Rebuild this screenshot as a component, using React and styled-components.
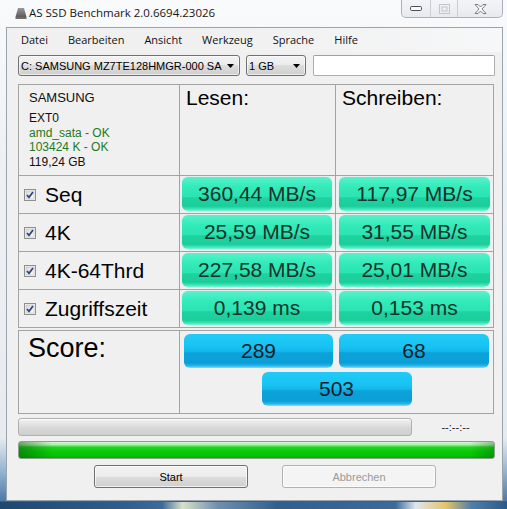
import React from "react";
import styled, { createGlobalStyle } from "styled-components";

const Global = createGlobalStyle`
  html, body { margin: 0; padding: 0; background: #ffffff; }
  body { width: 507px; height: 509px; overflow: hidden; }
  * { box-sizing: border-box; }
`;

const Frame = styled.div`
  width: 507px;
  height: 509px;
  display: flex;
  flex-direction: column;
  background: linear-gradient(to bottom, #f9fafc 0%, #eef1f4 30%, #e7ebef 86%, #8fb0cf 93%, #3a6a9a 100%);
  font-family: "Liberation Sans", Arial, sans-serif;
`;

const TitleBar = styled.div`
  height: 27px;
  flex-shrink: 0;
  display: flex;
  align-items: flex-start;
  padding: 0 4px 0 15px;
`;

const TitleIconBox = styled.svg`
  margin-top: 7px;
  flex-shrink: 0;
`;

const TitleText = styled.span`
  font-family: "Open Sans", "Noto Sans", sans-serif;
  font-size: 11.5px;
  line-height: 16px;
  color: #161616;
  margin: 5px 0 0 2px;
  white-space: nowrap;
`;

const CaptionGroup = styled.div`
  margin-left: auto;
  display: flex;
  height: 18px;
  border: 1px solid #a9b2bc;
  border-top: none;
  border-radius: 0 0 5px 5px;
  background: linear-gradient(to bottom, #f3f5f8, #e6eaef);
  overflow: hidden;
`;

const CaptionButton = styled.div`
  width: ${(p) => p.$w}px;
  display: flex;
  align-items: center;
  justify-content: center;
  border-left: ${(p) => (p.$first ? "none" : "1px solid #c9ced5")};
`;

const Client = styled.div`
  flex: 1;
  margin: 0 4px 0 6px;
  border: 1px solid #9aa4af;
  background: #f0f0f0;
  display: flex;
  flex-direction: column;
  padding: 0 7px 0 11px;
`;

const MenuBar = styled.div`
  height: 24px;
  display: flex;
  align-items: center;
  gap: 20px;
  margin: 0 -7px 0 -11px;
  padding-left: 14px;
  background: linear-gradient(to right, #f0f0f0 40%, #f6f7f8 100%);
`;

const MenuItem = styled.span`
  font-family: "Open Sans", "Noto Sans", sans-serif;
  font-size: 11px;
  color: #111;
  line-height: 16px;
`;

const ComboRow = styled.div`
  margin-top: 3px;
  height: 21px;
  display: flex;
  gap: 6px;
`;

const Combo = styled.div`
  width: ${(p) => p.$w}px;
  flex-shrink: 0;
  height: 21px;
  display: flex;
  align-items: center;
  border: 1px solid #707070;
  border-radius: 3px;
  background: linear-gradient(to bottom, #f2f2f2 0%, #ebebeb 50%, #dddddd 50%, #cfcfcf 100%);
  box-shadow: inset 0 0 0 1px rgba(255, 255, 255, 0.6);
  padding-left: 2px;
`;

const ComboText = styled.span`
  flex: 1;
  white-space: nowrap;
  font-size: 11px;
  color: #000;
`;

const ComboArrow = styled.div`
  width: 17px;
  flex-shrink: 0;
  display: flex;
  align-items: center;
  justify-content: center;
`;

const TextBox = styled.div`
  flex: 1;
  margin-left: 1px;
  height: 21px;
  background: #fff;
  border: 1px solid #abadb3;
  border-top-color: #9da1a9;
  border-radius: 2px;
`;

const Table = styled.div`
  margin-top: 8px;
  display: grid;
  grid-template-columns: 160px 155px 157px;
  grid-template-rows: 90px repeat(4, 37px);
  gap: 1px;
  padding: 1px;
  background: #a3a3a3;
  width: 476px;
`;

const Cell = styled.div`
  background: #f0f0f0;
`;

const InfoCell = styled(Cell)`
  padding: 5px 0 0 10px;
  font-size: 12px;
  line-height: 14.6px;
  color: #111;
`;

const DriveName = styled.div`
  font-size: 13px;
  line-height: 16px;
  margin-bottom: 5px;
`;

const InfoLine = styled.div`
  color: ${(p) => (p.$ok ? "#1e7a22" : "#111")};
`;

const HeadCell = styled(Cell)`
  padding: 2px 0 0 6px;
  font-size: 21px;
  line-height: 22px;
  color: #000;
`;

const LabelCell = styled(Cell)`
  display: flex;
  align-items: center;
  gap: 9px;
  padding-left: 5px;
  font-size: 21px;
  color: #000;
`;

const ResultCell = styled(Cell)`
  display: flex;
  padding: 1px 3px 2px ${(p) => p.$pl}px;
`;

const GreenBox = styled.div`
  flex: 1;
  border-radius: 6px;
  display: flex;
  align-items: center;
  justify-content: center;
  font-size: 21px;
  color: #17332c;
  background: linear-gradient(
    to bottom,
    #56f3cc 0%,
    #33eab9 30%,
    #2be4b2 58%,
    #1fd3a1 61%,
    #1bcd9a 86%,
    #3ee5b8 94%,
    #7cf6d6 100%
  );
  box-shadow: 0 0 1px #5ef0c8;
`;

const ScoreTable = styled.div`
  margin-top: 2px;
  display: grid;
  grid-template-columns: 160px 313px;
  height: 84px;
  gap: 1px;
  padding: 1px;
  background: #a3a3a3;
  width: 476px;
`;

const ScoreLabel = styled(Cell)`
  padding: 2px 0 0 9px;
  font-size: 27px;
  line-height: 30px;
  color: #000;
`;

const ScoreArea = styled(Cell)`
  display: grid;
  grid-template-columns: 149px 150px;
  grid-auto-rows: 34px;
  gap: 4px 6px;
  padding: 3px 4px;
`;

const BlueBox = styled.div`
  border-radius: 6px;
  display: flex;
  align-items: center;
  justify-content: center;
  font-size: 21px;
  color: #0f1d28;
  background: linear-gradient(
    to bottom,
    #22cbf7 0%,
    #17c2f2 40%,
    #12b6ea 52%,
    #0ca3da 55%,
    #0a9ed6 85%,
    #2ab8ea 94%,
    #8fdcf8 100%
  );
  ${(p) => (p.$wide ? "grid-column: 1 / span 2; justify-self: center; width: 150px;" : "")}
`;

const ProgressRow = styled.div`
  margin-top: 4px;
  height: 18px;
  display: flex;
  align-items: center;
`;

const GrayBar = styled.div`
  width: 394px;
  height: 18px;
  border: 1px solid #b0b0b0;
  border-radius: 3px;
  background: linear-gradient(to bottom, #f2f2f2 0%, #e2e2e2 35%, #d6d6d6 60%, #cfcfcf 100%);
  box-shadow: inset 0 1px 0 rgba(255, 255, 255, 0.8);
`;

const TimeLabel = styled.span`
  flex: 1;
  text-align: center;
  font-size: 11px;
  color: #222;
  padding-left: 4px;
`;

const GreenBar = styled.div`
  margin-top: 5px;
  height: 18px;
  border: 1px solid #8aa08a;
  border-radius: 3px;
  background:
    linear-gradient(to right, rgba(0, 70, 0, 0.45) 0%, rgba(0, 70, 0, 0) 7%, rgba(0, 70, 0, 0) 95%, rgba(0, 70, 0, 0.3) 100%),
    linear-gradient(to bottom, #d6f6d6 0%, #a4eea4 18%, #22d322 32%, #07ca07 60%, #05c205 85%, #0aa90a 100%);
`;

const ButtonRow = styled.div`
  margin-top: 6px;
  height: 23px;
  display: flex;
  gap: 34px;
  padding-left: 76px;
`;

const Button = styled.div`
  width: 154px;
  height: 23px;
  border-radius: 3px;
  display: flex;
  align-items: center;
  justify-content: center;
  font-size: 11px;
  border: 1px solid ${(p) => (p.$disabled ? "#adb2b5" : "#707070")};
  color: ${(p) => (p.$disabled ? "#9a9a9a" : "#000")};
  background: ${(p) =>
    p.$disabled
      ? "#f4f4f4"
      : "linear-gradient(to bottom, #f2f2f2 0%, #ebebeb 50%, #dddddd 50%, #cfcfcf 100%)"};
  box-shadow: inset 0 0 0 1px rgba(255, 255, 255, 0.7);
`;

const BottomEdge = styled.div`
  height: 8px;
  flex-shrink: 0;
  border-top: 1px solid #3d5f82;
  background: linear-gradient(
    to right,
    #1e4770 0%,
    #2e5f8f 25%,
    #3c6c9a 32%,
    #d8e0c8 36%,
    #6f8fae 43%,
    #2f5f8e 55%,
    #3a6b9a 78%,
    #dfe6ef 82%,
    #e2c46a 88%,
    #4f7fab 93%,
    #2a5a88 100%
  );
`;

const DriveIcon = () => (
  <TitleIconBox width="12" height="12" viewBox="0 0 12 12">
    <defs>
      <linearGradient id="di" x1="0" y1="0" x2="0" y2="1">
        <stop offset="0" stopColor="#9a9a9a" />
        <stop offset="1" stopColor="#5a5a5a" />
      </linearGradient>
    </defs>
    <polygon points="3,1 9,1 11.5,10 0.5,10" fill="url(#di)" />
    <rect x="0.5" y="10" width="11" height="2" fill="#6e6e6e" />
  </TitleIconBox>
);

const Arrow = () => (
  <svg width="7" height="4" viewBox="0 0 7 4">
    <polygon points="0,0 7,0 3.5,4" fill="#000" />
  </svg>
);

const Check = () => (
  <svg width="12" height="12" viewBox="0 0 12 12">
    <defs>
      <linearGradient id="cb" x1="0" y1="0" x2="1" y2="1">
        <stop offset="0" stopColor="#d9d9d9" />
        <stop offset="1" stopColor="#fbfbfb" />
      </linearGradient>
    </defs>
    <rect x="0.5" y="0.5" width="11" height="11" fill="#f4f4f4" stroke="#8f8f8f" />
    <rect x="2" y="2" width="8" height="8" fill="url(#cb)" stroke="#c0c0c0" strokeWidth="0.6" />
    <path d="M3 6 L5 8.3 L9 3" fill="none" stroke="#2e437c" strokeWidth="1.7" />
  </svg>
);

const rows = [
  { label: "Seq", read: "360,44 MB/s", write: "117,97 MB/s" },
  { label: "4K", read: "25,59 MB/s", write: "31,55 MB/s" },
  { label: "4K-64Thrd", read: "227,58 MB/s", write: "25,01 MB/s" },
  { label: "Zugriffszeit", read: "0,139 ms", write: "0,153 ms" },
];

const menus = ["Datei", "Bearbeiten", "Ansicht", "Werkzeug", "Sprache", "Hilfe"];

export default function App() {
  return (
    <>
      <Global />
      <Frame>
        <TitleBar>
          <DriveIcon />
          <TitleText>AS SSD Benchmark 2.0.6694.23026</TitleText>
          <CaptionGroup>
            <CaptionButton $w={28} $first>
              <svg width="12" height="5" viewBox="0 0 12 5">
                <rect x="0.5" y="0.5" width="11" height="4" rx="1.2" fill="#fafafa" stroke="#4a4f57" />
              </svg>
            </CaptionButton>
            <CaptionButton $w={27}>
              <svg width="11" height="10" viewBox="0 0 11 10">
                <rect x="0.5" y="0.5" width="10" height="9" fill="none" stroke="#c2c6cc" />
                <rect x="3" y="3" width="5" height="4" fill="none" stroke="#c2c6cc" />
              </svg>
            </CaptionButton>
            <CaptionButton $w={45}>
              <svg width="13" height="10" viewBox="0 0 13 10">
                <path
                  d="M1 0.5 H4 L6.5 3 L9 0.5 H12 L8 5 L12 9.5 H9 L6.5 7 L4 9.5 H1 L5 5 Z"
                  fill="#fafafa"
                  stroke="#6a7079"
                  strokeWidth="0.9"
                />
              </svg>
            </CaptionButton>
          </CaptionGroup>
        </TitleBar>

        <Client>
          <MenuBar>
            {menus.map((m) => (
              <MenuItem key={m}>{m}</MenuItem>
            ))}
          </MenuBar>

          <ComboRow>
            <Combo $w={222}>
              <ComboText>C: SAMSUNG MZ7TE128HMGR-000 SA</ComboText>
              <ComboArrow>
                <Arrow />
              </ComboArrow>
            </Combo>
            <Combo $w={60}>
              <ComboText>1 GB</ComboText>
              <ComboArrow>
                <Arrow />
              </ComboArrow>
            </Combo>
            <TextBox />
          </ComboRow>

          <Table>
            <InfoCell>
              <DriveName>SAMSUNG</DriveName>
              <InfoLine>EXT0</InfoLine>
              <InfoLine $ok>amd_sata - OK</InfoLine>
              <InfoLine $ok>103424 K - OK</InfoLine>
              <InfoLine>119,24 GB</InfoLine>
            </InfoCell>
            <HeadCell>Lesen:</HeadCell>
            <HeadCell>Schreiben:</HeadCell>
            {rows.map((r) => (
              <React.Fragment key={r.label}>
                <LabelCell>
                  <Check />
                  {r.label}
                </LabelCell>
                <ResultCell $pl={2}>
                  <GreenBox>{r.read}</GreenBox>
                </ResultCell>
                <ResultCell $pl={3}>
                  <GreenBox>{r.write}</GreenBox>
                </ResultCell>
              </React.Fragment>
            ))}
          </Table>

          <ScoreTable>
            <ScoreLabel>Score:</ScoreLabel>
            <ScoreArea>
              <BlueBox>289</BlueBox>
              <BlueBox>68</BlueBox>
              <BlueBox $wide>503</BlueBox>
            </ScoreArea>
          </ScoreTable>

          <ProgressRow>
            <GrayBar />
            <TimeLabel>--:--:--</TimeLabel>
          </ProgressRow>

          <GreenBar />

          <ButtonRow>
            <Button>Start</Button>
            <Button $disabled>Abbrechen</Button>
          </ButtonRow>
        </Client>
        <BottomEdge />
      </Frame>
    </>
  );
}
